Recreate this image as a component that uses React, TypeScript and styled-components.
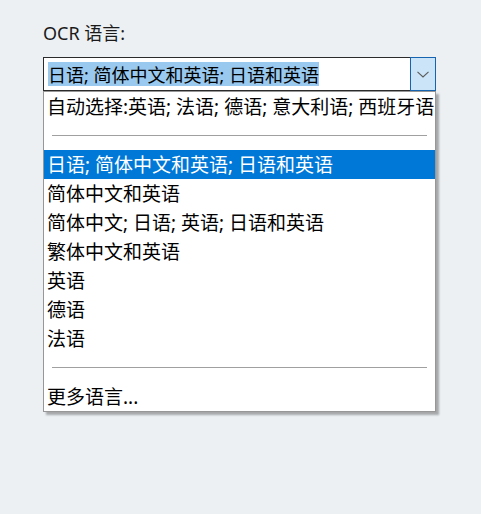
import React from "react";
import styled, { createGlobalStyle } from "styled-components";

const GlobalStyle = createGlobalStyle`
  html, body {
    margin: 0;
    padding: 0;
    background: #edf0f3;
  }
  body {
    font-family: "Noto Sans", "Noto Sans CJK SC", sans-serif;
    color: #111;
  }
`;

const Page = styled.div`
  padding: 21px 0 0 43px;
  min-height: 514px;
  box-sizing: border-box;
`;

const Label = styled.div`
  font-size: 18px;
  line-height: 24px;
  height: 24px;
  margin-bottom: 12px;
  color: #1a1a1a;
`;

const ComboWrap = styled.div`
  position: relative;
  width: 393px;
`;

const Combo = styled.div`
  display: flex;
  height: 34px;
  box-sizing: border-box;
  border: 1px solid #2b2b2b;
  background: #fff;
`;

const ComboField = styled.div`
  flex: 1;
  display: flex;
  align-items: center;
  padding: 0 4px;
`;

const Selected = styled.span`
  background: #99c9ef;
  color: #000;
  font-size: 18px;
  line-height: 24px;
  height: 24px;
  padding-top: 1px;
  box-sizing: border-box;
  white-space: nowrap;
`;

const ComboButton = styled.div`
  width: 26px;
  margin: -1px -1px -1px 0;
  border: 1px solid #1663b0;
  background: #cce4f7;
  display: flex;
  align-items: center;
  justify-content: center;
  box-sizing: border-box;
`;

const List = styled.ul`
  position: absolute;
  top: 100%;
  left: 0;
  width: 393px;
  margin: 0;
  padding: 0;
  list-style: none;
  box-sizing: border-box;
  background: #fff;
  border: 1px solid #979797;
  box-shadow: 3px 3px 2px rgba(0, 0, 0, 0.3);
`;

const Item = styled.li<{ $active?: boolean }>`
  height: 29px;
  line-height: 27px;
  padding: 2px 3px 0;
  box-sizing: border-box;
  font-size: 19px;
  white-space: nowrap;
  background: ${(p) => (p.$active ? "#0078d7" : "transparent")};
  color: ${(p) => (p.$active ? "#fff" : "#000")};
`;

const Separator = styled.li`
  height: 29px;
  display: flex;
  align-items: center;
  padding: 0 8px;
  &::after {
    content: "";
    display: block;
    flex: 1;
    height: 1px;
    background: #a0a0a0;
  }
`;

const items = [
  "简体中文和英语",
  "简体中文; 日语; 英语; 日语和英语",
  "繁体中文和英语",
  "英语",
  "德语",
  "法语",
];

export default function App() {
  return (
    <>
      <GlobalStyle />
      <Page>
        <Label>OCR 语言:</Label>
        <ComboWrap>
          <Combo>
            <ComboField>
              <Selected>日语; 简体中文和英语; 日语和英语</Selected>
            </ComboField>
            <ComboButton>
              <svg width="12" height="7" viewBox="0 0 12 7">
                <path d="M0.5 0.8 L6 6 L11.5 0.8" fill="none" stroke="#5a5a5a" strokeWidth="1.1" />
              </svg>
            </ComboButton>
          </Combo>
          <List>
            <Item>自动选择:英语; 法语; 德语; 意大利语; 西班牙语</Item>
            <Separator />
            <Item $active>日语; 简体中文和英语; 日语和英语</Item>
            {items.map((t) => (
              <Item key={t}>{t}</Item>
            ))}
            <Separator />
            <Item>更多语言...</Item>
          </List>
        </ComboWrap>
      </Page>
    </>
  );
}
